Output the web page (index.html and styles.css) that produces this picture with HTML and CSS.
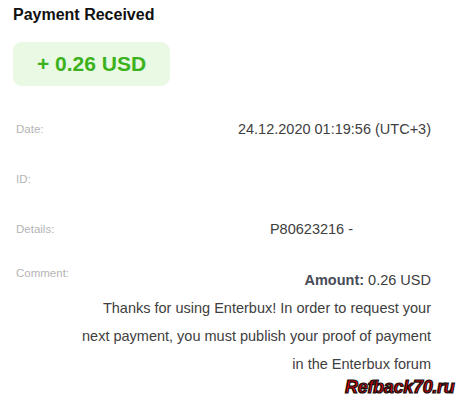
FILE: index.html
```html
<!DOCTYPE html>
<html>
<head>
    <title>Payment Received</title>
    <link rel="stylesheet" href="styles.css">
</head>
<body>
    <div class="payment">
        <h1 class="title">Payment Received</h1>
        <div class="sum">+ 0.26 USD</div>

        <div class="info">
            <div class="row">
                <div class="label">Date:</div>
                <div class="value">24.12.2020 01:19:56 (UTC+3)</div>
            </div>
            <div class="row">
                <div class="label">ID:</div>
                <div class="value"></div>
            </div>
            <div class="row">
                <div class="label">Details:</div>
                <div class="value details">P80623216 -</div>
            </div>
            <div class="row comment">
                <div class="label">Comment:</div>
                <div class="value">
                    <b>Amount:</b> 0.26 USD<br>
                    Thanks for using Enterbux! In order to request your<br>
                    next payment, you must publish your proof of payment<br>
                    in the Enterbux forum
                </div>
            </div>
        </div>
    </div>
    <div class="watermark">Refback70.ru</div>
</body>
</html>
```

FILE: styles.css
```css
body {
    margin: 0;
    font-family: "Liberation Sans", Arial, Helvetica, sans-serif;
    background-color: #fff;
}
.payment {
    padding: 5px 39px 0 13px;
}
.title {
    margin: 0;
    font-size: 16px;
    line-height: 20px;
    font-weight: bold;
    color: #111;
}
.sum {
    margin-top: 17px;
    width: 157px;
    height: 44px;
    line-height: 44px;
    text-align: center;
    border-radius: 9px;
    background-color: #e9f9e4;
    color: #3bb21c;
    font-size: 21px;
    font-weight: bold;
}
.info {
    margin-top: 18px;
}
.row {
    display: grid;
    grid-template-columns: 67px 1fr;
    align-items: center;
    height: 50px;
}
.label {
    padding-left: 3px;
    font-size: 11.5px;
    color: #b4b4b4;
}
.value {
    text-align: right;
    font-size: 14.5px;
    color: #404040;
}
.details {
    padding-right: 78px;
}
.comment {
    align-items: start;
    height: auto;
}
.comment .label {
    padding-top: 13px;
}
.comment .value {
    padding-top: 12px;
    line-height: 28px;
}
.comment b {
    color: #474c57;
}
.watermark {
    position: absolute;
    left: 345px;
    top: 377px;
    font-size: 18px;
    font-weight: bold;
    font-style: italic;
    color: #d80000;
    -webkit-text-stroke: 1.2px #111;
    letter-spacing: -0.3px;
}
```
